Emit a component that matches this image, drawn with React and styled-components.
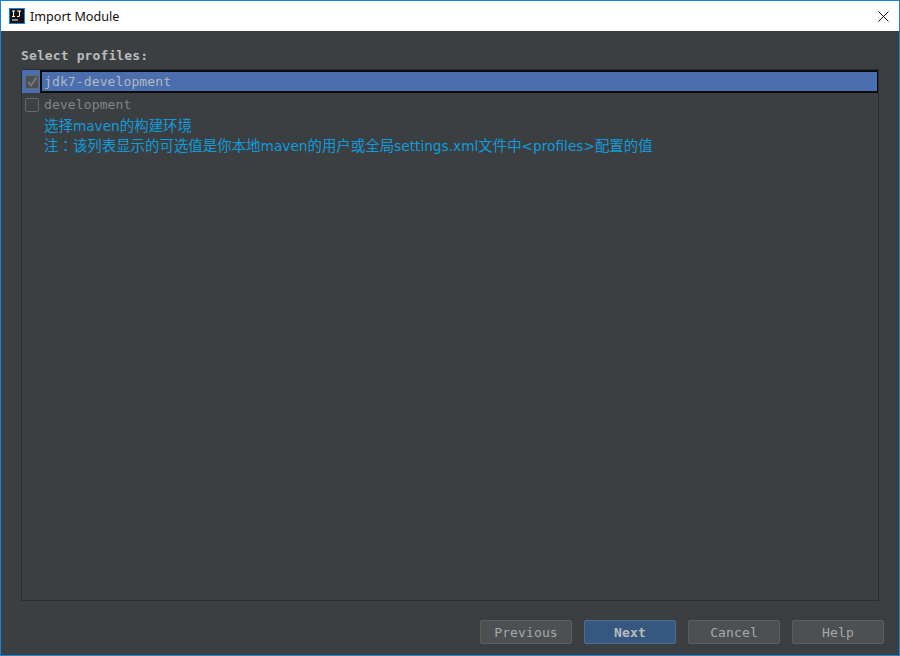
import React from "react";
import styled, { createGlobalStyle } from "styled-components";

const Global = createGlobalStyle`
  html, body { margin: 0; padding: 0; background: #3c3f41; }
  #root { width: 900px; height: 656px; }
`;
const Win = styled.div`
  box-sizing: border-box; width: 900px; height: 656px;
  border: 1px solid #1883d7; display: flex; flex-direction: column;
  background: #3c3f41; overflow: hidden;
`;
const TitleBar = styled.div`
  height: 30px; flex: none; background: #fff; display: flex; align-items: center;
  padding: 0 10px 0 8px; gap: 5px;
  font: 12.6px "Noto Sans", "Liberation Sans", sans-serif; color: #111;
`;
const Title = styled.span`flex: 1;`;
const Body = styled.div`
  flex: 1; display: flex; flex-direction: column; padding: 16px 15px 11px 20px; min-height: 0;
`;
const Heading = styled.div`
  font: bold 13px/18px "DejaVu Sans Mono", monospace; letter-spacing: 0.12px;
  color: #bbbbbb; height: 18px; margin-bottom: 4px;
`;
const List = styled.div`
  flex: 1; border: 1px solid #2b2d2e; min-height: 0; display: flex; flex-direction: column;
  margin-right: 5px;
`;
const Row = styled.div`
  height: 23px; display: flex; align-items: center; flex: none;
  background: ${p => (p.$selected ? "#4b6eaf" : "transparent")};
`;
const CheckCell = styled.div`
  width: 18px; flex: none; display: flex; align-items: center; padding-left: 3px; box-sizing: border-box;
`;
const Box = styled.div`
  box-sizing: border-box; width: 14px; height: 14px; border-radius: 2px;
  border: 1px solid #666a6c; background: ${p => (p.$checked ? "#4d5052" : "#3f4244")};
  display: flex; align-items: center; justify-content: center;
`;
const Label = styled.div`
  flex: 1; height: 100%; box-sizing: border-box; padding-left: 2px;
  font: 13px "DejaVu Sans Mono", monospace; letter-spacing: 0.12px;
  display: flex; align-items: center;
  color: ${p => (p.$selected ? "#b4b8bf" : "#858585")};
  border: 2px solid ${p => (p.$selected ? "#0c0c0c" : "transparent")};
  border-right-width: 1px;
`;
const Note = styled.div`
  padding: 0 0 0 22px;
  font: 14.45px/17.5px "Noto Sans CJK SC", "Noto Sans", sans-serif; color: #0f9bdc;
`;
const Latin = styled.span`
  font-family: "DejaVu Sans", sans-serif; font-size: 13.7px;
`;
const Punct = styled.span`
  font-family: "Noto Sans CJK TC", sans-serif;
`;
const Footer = styled.div`
  display: flex; justify-content: flex-end; gap: 12px; margin-top: 19px; flex: none;
`;
const Button = styled.div`
  box-sizing: border-box; width: 92px; height: 24px; border-radius: 2px;
  display: flex; align-items: center; justify-content: center;
  font: ${p => (p.$primary ? "bold" : "normal")} 13px "DejaVu Sans Mono", monospace;
  letter-spacing: 0.12px;
  color: ${p => (p.$primary ? "#bbbbbb" : "#a9a9a9")};
  background: ${p => (p.$primary ? "#365880" : "#4c5052")};
  border: 1px solid ${p => (p.$primary ? "#4c708c" : "#5e6060")};
`;

const Logo = () => (
  <svg width="16" height="16" viewBox="0 0 16 16" style={{ flex: "none" }}>
    <rect x="0" y="0" width="16" height="16" fill="#1883d7" />
    <rect x="1" y="1" width="14" height="14" fill="#111" />
    <path d="M3 3 H6 M4.5 3 V8.5 M3 8.5 H6 M8 3 H12 M10.5 3 V7.5 Q10.5 8.5 9.5 8.5 H8" fill="none" stroke="#fff" strokeWidth="1.1" />
    <rect x="3" y="11.5" width="6" height="1" fill="#fff" />
  </svg>
);

const Tick = () => (
  <svg width="12" height="12" viewBox="0 0 12 12">
    <path d="M2 6 L5 9.5 L10.5 1.5" fill="none" stroke="#74777a" strokeWidth="2" />
  </svg>
);

const Close = () => (
  <svg width="11" height="11" viewBox="0 0 11 11">
    <path d="M0.5 0.5 L10.5 10.5 M10.5 0.5 L0.5 10.5" stroke="#111" strokeWidth="1" />
  </svg>
);

export default function App() {
  return (
    <Win>
      <Global />
      <TitleBar>
        <Logo />
        <Title>Import Module</Title>
        <Close />
      </TitleBar>
      <Body>
        <Heading>Select profiles:</Heading>
        <List>
          <Row $selected>
            <CheckCell><Box $checked><Tick /></Box></CheckCell>
            <Label $selected>jdk7-development</Label>
          </Row>
          <Row>
            <CheckCell><Box /></CheckCell>
            <Label>development</Label>
          </Row>
          <Note>
            选择<Latin>maven</Latin>的构建环境<br />
            注<Punct>：</Punct>该列表显示的可选值是你本地<Latin>maven</Latin>的用户或全局<Latin>settings.xml</Latin>文件中<Latin>&lt;profiles&gt;</Latin>配置的值
          </Note>
        </List>
        <Footer>
          <Button>Previous</Button>
          <Button $primary>Next</Button>
          <Button>Cancel</Button>
          <Button>Help</Button>
        </Footer>
      </Body>
    </Win>
  );
}
